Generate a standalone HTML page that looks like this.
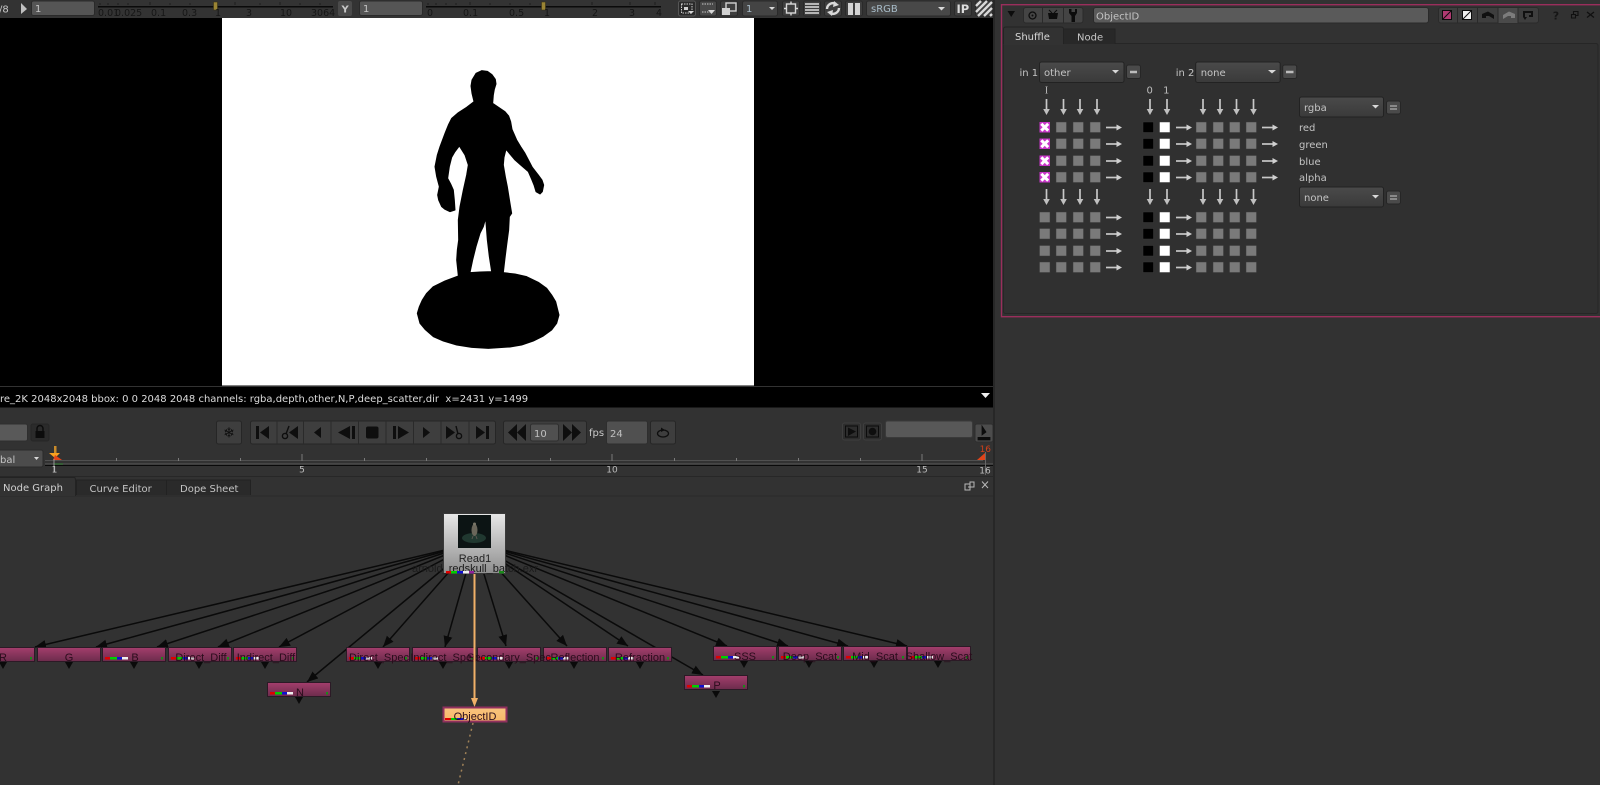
<!DOCTYPE html>
<html>
<head>
<meta charset="utf-8">
<title>Nuke Shuffle</title>
<style>
html,body{margin:0;padding:0;background:#323232;width:1600px;height:785px;overflow:hidden}
svg{display:block;position:absolute;left:0;top:0;font-family:"DejaVu Sans","Liberation Sans",sans-serif;font-size:10px}
.s{fill:#c8c8c8}
.d{fill:#161616;font-size:9.5px}
.nl{fill:#2a0c1c;font-family:"Liberation Sans",sans-serif;font-size:11px;text-anchor:middle}
.btn{fill:#3e3e3e;stroke:#262626}
.inp{fill:#555;stroke:#2a2a2a}
.ic{fill:#0e0e0e}
.ts{fill:#bdbdbd;font-size:9px;text-anchor:middle}
</style>
</head>
<body>
<svg width="1600" height="785" viewBox="0 0 1600 785" xmlns="http://www.w3.org/2000/svg">
<defs>
<linearGradient id="ng" x1="0" y1="0" x2="0" y2="1"><stop offset="0" stop-color="#a43e6c"/><stop offset="1" stop-color="#6c2c4c"/></linearGradient>
<linearGradient id="og" x1="0" y1="0" x2="0" y2="1"><stop offset="0" stop-color="#f8c47e"/><stop offset="1" stop-color="#f8b868"/></linearGradient>
<linearGradient id="rg" x1="0" y1="0" x2="0" y2="1"><stop offset="0" stop-color="#e8e8e8"/><stop offset="1" stop-color="#8e8e8e"/></linearGradient>
<linearGradient id="bg" x1="0" y1="0" x2="0" y2="1"><stop offset="0" stop-color="#4a4a4a"/><stop offset="1" stop-color="#3a3a3a"/></linearGradient>
<marker id="ah" markerUnits="userSpaceOnUse" markerWidth="12" markerHeight="10" refX="11" refY="4.5" orient="auto"><path d="M0,0L11,4.5L0,9Z" fill="#0a0a0a"/></marker>
<g id="node"><rect x=".5" y=".5" width="63" height="14" fill="url(#ng)" stroke="#2c1a26"/></g>
<g id="bars"><rect x="3" y="10" width="5" height="2.5" fill="#e00000"/><rect x="8" y="10" width="7" height="2.5" fill="#00d000"/><rect x="15" y="10" width="5" height="2.5" fill="#1010d0"/><rect x="20" y="10" width="6" height="2.5" fill="#f0f0f0"/><rect x="59" y="10" width="2" height="2.5" fill="#1a8a1a"/></g>
<path id="tri" d="M-4,0H4L0,7Z" fill="#0a0a0a"/>
<rect id="sq" width="10.500" height="10.500" fill="#7a7a7a" stroke="#3a3a3a" stroke-width=".5"/>
<rect id="bk" width="10.500" height="10.500" fill="#000" stroke="#3a3a3a" stroke-width=".5"/>
<rect id="wh" width="10.500" height="10.500" fill="#fff" stroke="#3a3a3a" stroke-width=".5"/>
<g id="xb"><rect width="10.500" height="10.500" fill="#c836c8"/><path d="M1.800,1.800L8.700,8.700M8.700,1.800L1.800,8.700" stroke="#fff" stroke-width="3"/></g>
<g id="rarr"><path d="M0,0H11" stroke="#c8c8c8" stroke-width="1.700"/><path d="M10.500,-3L16,0L10.500,3Z" fill="#d0d0d0"/></g>
<g id="darr"><path d="M0,0V11" stroke="#c8c8c8" stroke-width="1.700"/><path d="M-3.300,10L0,16L3.300,10Z" fill="#c0c0c0"/></g>
</defs>

<!-- base -->
<rect width="1600" height="785" fill="#323232"/>

<!-- viewer -->
<rect x="0" y="18" width="993" height="368" fill="#000"/>
<rect x="222" y="18" width="532" height="367.500" fill="#fff"/>
<g transform="translate(400,50) scale(.33333)">
<path fill="#000" stroke="#000" stroke-width="3" stroke-linejoin="round" fill-rule="evenodd" d="M245,62L262,64L276,74L286,88L288,102L283,118L280,135L278,160L300,175L315,185L326,198L332,215L336,238L350,270L362,290L375,310L388,335L397,352L415,375L426,390L431,405L427,425L420,432L408,425L402,405L395,388L385,365L362,345L345,330L318,298L312,322L310,345L316,380L322,410L330,460L335,490L328,500L326,540L320,585L315,625L310,668L345,672L380,680L415,697L440,715L455,735L467,755L477,795L470,820L455,840L430,858L400,873L365,885L330,891L265,895L215,892L170,885L130,873L100,860L75,838L60,820L52,790L58,770L67,750L80,730L100,710L135,693L175,678L170,630L172,600L176,570L175,510L180,470L190,420L200,375L205,345L195,315L178,288L165,305L155,322L148,350L143,385L152,402L160,420L163,450L165,480L150,485L135,478L125,470L116,450L113,435L118,410L110,380L105,350L112,315L120,290L135,250L145,225L155,205L175,188L200,172L222,155L216,130L213,108L216,90L228,70ZM257,505L250,530L240,550L228,590L218,630L210,668L240,666L275,665L268,620L262,570Z"/>
</g>

<!-- top toolbar -->
<rect x="0" y="0" width="993" height="18" fill="#333"/>
<text x="-1" y="12.500" class="s">/8</text>
<path d="M21,3L27,9L21,14Z" fill="#c0c0c0"/>
<rect x="31.500" y="1" width="63" height="14.500" rx="2" class="inp"/>
<text x="35" y="12" fill="#c4c4c4">1</text>
<rect x="98" y="6" width="235" height="1.500" fill="#0a0a0a"/>
<path d="M100,3V5M108,3V5M118,3V5M128,3V5M150,2V5M170,3V5M190,3V5M235,2V5M260,3V5M280,2V5M300,3V5M320,3V5" stroke="#1e1e1e"/>
<rect x="213.500" y="2" width="4" height="8" fill="#9a8434" stroke="#3a3218" stroke-width=".6"/>
<text x="98" y="16" class="d">0.01</text><text x="115" y="16" class="d">0.025</text>
<text x="151" y="16" class="d">0.1</text><text x="182" y="16" class="d">0.3</text><text x="215" y="16" class="d">1</text><text x="246" y="16" class="d">3</text><text x="280" y="16" class="d">10</text><text x="311" y="16" class="d">3064</text>
<rect x="338" y="1" width="14" height="15" rx="2" fill="#4a4a4a"/>
<text x="341.500" y="12.500" fill="#c8c8c8" font-weight="bold" font-size="10">Y</text>
<rect x="359.500" y="1" width="63" height="14.500" rx="2" class="inp"/>
<text x="363" y="12" fill="#c4c4c4">1</text>
<rect x="426" y="6" width="235" height="1.500" fill="#0a0a0a"/>
<path d="M428,3V5M436,3V5M446,3V5M456,3V5M470,2V5M490,3V5M510,3V5M530,3V5M592,2V5M630,2V5M655,2V5" stroke="#1e1e1e"/>
<rect x="541.500" y="2" width="4" height="8" fill="#9a8434" stroke="#3a3218" stroke-width=".6"/>
<text x="427" y="16" class="d">0</text><text x="463" y="16" class="d">0.1</text><text x="509" y="16" class="d">0.5</text><text x="544" y="16" class="d">1</text><text x="592" y="16" class="d">2</text><text x="629" y="16" class="d">3</text><text x="656" y="16" class="d">4</text>

<rect x="678.500" y="1" width="17" height="15" rx="2" fill="#2a2a2a" stroke="#555"/>
<path d="M681.500,4H692V13H681.500Z" fill="none" stroke="#cfcfcf" stroke-dasharray="1.500 1"/><rect x="684" y="7" width="4" height="3" fill="#cfcfcf"/><path d="M688,11H694L691,14Z" fill="#d8d8d8"/>
<rect x="699.500" y="1" width="17" height="15" rx="2" fill="#484848" stroke="#2a2a2a"/>
<path d="M702,4H713M702,12H713" stroke="#c8c8c8" stroke-dasharray="1.500 1"/><path d="M708,10H715L711.500,14Z" fill="#d8d8d8"/>
<rect x="720.500" y="1" width="17" height="15" rx="2" fill="#3e3e3e" stroke="#2a2a2a"/>
<rect x="726" y="3" width="10" height="8" fill="none" stroke="#d0d0d0" stroke-width="1.400"/><rect x="722" y="8" width="8" height="7" fill="#d0d0d0"/>
<rect x="742.500" y="1" width="35" height="15" rx="2" fill="#444" stroke="#2a2a2a"/>
<text x="746" y="12" fill="#a8bcc8">1</text><path d="M769,7H775L772,10Z" fill="#d8d8d8"/>
<rect x="782.500" y="1" width="17" height="15" rx="2" fill="#3e3e3e" stroke="#2a2a2a"/>
<rect x="786.500" y="4" width="9" height="9" fill="none" stroke="#d8d8d8" stroke-width="1.400"/><path d="M791,1.500V4M791,13V15.500M784,8.500H786.500M795.500,8.500H798" stroke="#d8d8d8" stroke-width="1.400"/>
<rect x="803.500" y="1" width="17" height="15" rx="2" fill="#3e3e3e" stroke="#2a2a2a"/>
<path d="M805,4H819M805,7H819M805,10H819M805,13H819" stroke="#c8c8c8" stroke-width="1.800"/>
<rect x="824.500" y="1" width="17" height="15" rx="2" fill="#3e3e3e" stroke="#2a2a2a"/>
<path d="M827,9A6,6 0 0 1 836,4M839,8A6,6 0 0 1 830,13" fill="none" stroke="#d8d8d8" stroke-width="2.400"/><path d="M834,1L839,5L833,7ZM832,16L827,12L833,10Z" fill="#d8d8d8"/>
<rect x="845.500" y="1" width="17" height="15" rx="2" fill="#3e3e3e" stroke="#2a2a2a"/>
<rect x="848" y="3" width="5" height="12" fill="#d4d4d4"/><rect x="855" y="3" width="5" height="12" fill="#d4d4d4"/>
<rect x="866.500" y="1" width="84" height="15" rx="2" fill="#484848" stroke="#2a2a2a"/>
<text x="871" y="12" fill="#a8bcc8">sRGB</text><path d="M938,7H945L941.500,10.500Z" fill="#d8d8d8"/>
<rect x="954.500" y="1" width="17" height="15" rx="2" fill="#3e3e3e" stroke="#2a2a2a"/>
<text x="956.500" y="13" fill="#dcdcdc" font-weight="bold" font-size="11.500">IP</text>
<rect x="975.500" y="1" width="17" height="15" rx="2" fill="#3e3e3e" stroke="#2a2a2a"/>
<path d="M976,6L981,1M976,12L987,1M978,16L992,2M984,16L992,8M990,16L992,14" stroke="#d8d8d8" stroke-width="2.400"/>

<!-- info bar -->
<rect x="0" y="387" width="993" height="20.500" fill="#000"/>
<text x="0" y="402" fill="#dcdcdc" xml:space="preserve">re_2K 2048x2048 bbox: 0 0 2048 2048 channels: rgba,depth,other,N,P,deep_scatter,dir  x=2431 y=1499</text>
<path d="M981,393H990L985.500,398Z" fill="#f0f0f0"/>

<!-- transport -->
<rect x="-2" y="424" width="29.500" height="17" rx="2" fill="#595959" stroke="#2e2e2e"/>
<rect x="31" y="424" width="18" height="17" rx="2" fill="#2b2b2b" stroke="#262626"/>
<path d="M37,431V428.500A3,3 0 0 1 43,428.500V431" fill="none" stroke="#0c0c0c" stroke-width="1.500"/><rect x="35.500" y="431" width="9" height="7" fill="#0c0c0c"/>
<rect x="216.500" y="421" width="25" height="23" rx="2" class="btn"/>
<text x="229" y="437.500" fill="#0e0e0e" font-size="14" text-anchor="middle">❄</text>

<rect x="250.500" y="421" width="245" height="23" rx="2" class="btn"/>
<path d="M277,421V444M303.500,421V444M331,421V444M358.500,421V444M386,421V444M413.500,421V444M441,421V444M469,421V444" stroke="#2a2a2a"/>
<g class="ic">
<path d="M256,426H259V439H256ZM269,426V439L260,432.500Z"/>
<path d="M298,426V439L289,432.500Z"/><circle cx="285" cy="436" r="2.600" fill="none" stroke="#0e0e0e" stroke-width="1.400"/><path d="M286,434L289,426" stroke="#0e0e0e" stroke-width="1.400" fill="none"/>
<path d="M321,427V438L314,432.500Z"/>
<path d="M350,426V439L338,432.500ZM352,426H355V439H352Z"/>
<rect x="366" y="426.500" width="12.500" height="12" rx="2"/>
<path d="M393,426H396V439H393ZM398,426V439L409,432.500Z"/>
<path d="M423,427V438L430,432.500Z"/>
<path d="M446,426V439L455,432.500Z"/><circle cx="459" cy="436" r="2.600" fill="none" stroke="#0e0e0e" stroke-width="1.400"/><path d="M458,434L456,426" stroke="#0e0e0e" stroke-width="1.400" fill="none"/>
<path d="M476,426V439L485,432.500ZM486,426H489V439H486Z"/>
</g>

<rect x="503.500" y="421" width="83" height="23" rx="2" class="btn"/>
<path d="M508,432.500L517,424V441ZM517,432.500L526,424V441Z" class="ic"/>
<rect x="530.500" y="424" width="28" height="17" rx="2" fill="#505050" stroke="#2e2e2e"/>
<text x="534" y="437" fill="#c0c0c0">10</text>
<path d="M581,432.500L572,424V441ZM572,432.500L563,424V441Z" class="ic"/>
<text x="589" y="436" fill="#c8c8c8">fps</text>
<rect x="606.500" y="421" width="41" height="23" rx="2" fill="#505050" stroke="#2e2e2e"/>
<text x="610" y="437" fill="#c0c0c0">24</text>
<rect x="650.500" y="421" width="25" height="23" rx="2" class="btn"/>
<ellipse cx="663" cy="433.500" rx="5.500" ry="3.500" fill="none" stroke="#0e0e0e" stroke-width="1.300"/><path d="M661,427.500L665,430L661,432Z" class="ic"/>
<rect x="842.500" y="423" width="18" height="17" rx="2" fill="#2d2d2d" stroke="#3e3e3e"/>
<rect x="845.500" y="426" width="12" height="11" fill="none" stroke="#0c0c0c"/><path d="M848,427.500V436L856,431.500Z" class="ic"/>
<rect x="863.500" y="423" width="18" height="17" rx="2" fill="#2d2d2d" stroke="#3e3e3e"/>
<rect x="866.500" y="426" width="12" height="11" fill="none" stroke="#0c0c0c"/><circle cx="872.500" cy="431.500" r="3.800" class="ic"/>
<rect x="885.500" y="421" width="87" height="16.500" rx="2" fill="#585858" stroke="#3a3a3a"/>
<rect x="975" y="424" width="18" height="18" rx="2" fill="#4c4c4c" stroke="#2e2e2e"/>
<path d="M982,426L986,432L982,435ZM978,437V440H990V437M981,439V440M984,438V440M987,439V440" fill="#0c0c0c" stroke="#0c0c0c" stroke-width=".8"/>

<!-- timeline -->
<rect x="-4" y="450" width="47" height="17" rx="2" fill="#4c4c4c" stroke="#2a2a2a"/>
<text x="0" y="463" fill="#c4c4c4">bal</text><path d="M34,457H39L36.500,460Z" fill="#d8d8d8"/>
<path d="M45,460.500H983" stroke="#505050"/>
<rect x="45" y="465" width="948" height="1" fill="#0a0a0a"/>
<rect x="45" y="463.500" width="948" height=".8" fill="#5a5a5a"/>
<path d="M54,464H63" stroke="#3a7a3a" stroke-width="1.200"/>
<path d="M116.500,458V461M178.500,458V461M240.500,458V461M302,454V461M364.500,458V461M426.500,458V461M488.500,458V461M550.500,458V461M612,454V461M674.500,458V461M736.500,458V461M798.500,458V461M860.500,458V461M922,454V461" stroke="#7a7a7a"/>
<path d="M985.500,452V475" stroke="#666"/>
<rect x="54" y="446" width="2.500" height="7" fill="#c88a2a"/>
<path d="M49,453H60L55,458Z" fill="#f8a020"/>
<path d="M55,455L62,460H53Z" fill="#e0441a"/>
<path d="M54,459V472" stroke="#aaa" stroke-width=".8"/>
<path d="M985,453V460H977Z" fill="#e0441a"/>
<text x="985.300" y="452" font-size="9" fill="#d0401a" text-anchor="middle">16</text>
<text x="54.500" y="472.500" class="ts">1</text><text x="302" y="472.500" class="ts">5</text><text x="612" y="472.500" class="ts">10</text><text x="922" y="472.500" class="ts">15</text><text x="985" y="473.500" class="ts">16</text>
<rect x="0" y="476" width="993" height="1" fill="#272727"/>

<!-- tabs -->
<rect x="0" y="495.500" width="993" height="1" fill="#292929"/>
<path d="M76.500,495V480H166.500V495" fill="#2a2a2a" stroke="#222"/>
<path d="M166.500,495V480H250.500V495" fill="#2a2a2a" stroke="#222"/>
<path d="M0,477.500H75.500V496H0Z" fill="#323232"/><path d="M0,477.500H74.500Q75.500,478 75.500,480V496" fill="none" stroke="#232323"/>
<text x="3" y="491" fill="#d0d0d0">Node Graph</text>
<text x="89.500" y="492" fill="#c4c4c4">Curve Editor</text>
<text x="180" y="492" fill="#c4c4c4">Dope Sheet</text>
<path d="M968,487H974V482H970V484M965,484H970V490H965Z" fill="none" stroke="#b8b8b8"/>
<path d="M982,481.500L988,488M988,481.500L982,488" stroke="#b8b8b8"/>

<!-- panel divider -->
<rect x="993" y="0" width="2" height="785" fill="#272727"/>

<!-- node graph edges -->
<g stroke="#0a0a0a" stroke-width="1.500" fill="none">
<path d="M474.500,543L35,647" marker-end="url(#ah)"/>
<path d="M474.500,543L96,647" marker-end="url(#ah)"/>
<path d="M474.500,543L157,647" marker-end="url(#ah)"/>
<path d="M474.500,543L218,647" marker-end="url(#ah)"/>
<path d="M474.500,543L279,647" marker-end="url(#ah)"/>
<path d="M474.500,543L307,682" marker-end="url(#ah)"/>
<path d="M474.500,543L383,647" marker-end="url(#ah)"/>
<path d="M474.500,543L445,647" marker-end="url(#ah)"/>
<path d="M474.500,543L506,646" marker-end="url(#ah)"/>
<path d="M474.500,543L567,646" marker-end="url(#ah)"/>
<path d="M474.500,543L628,646" marker-end="url(#ah)"/>
<path d="M474.500,543L703,675" marker-end="url(#ah)"/>
<path d="M474.500,543L727,646" marker-end="url(#ah)"/>
<path d="M474.500,543L788,646" marker-end="url(#ah)"/>
<path d="M474.500,543L848,646" marker-end="url(#ah)"/>
<path d="M474.500,543L907,646" marker-end="url(#ah)"/>
</g>

<!-- tri connectors -->
<use href="#tri" x="3" y="662"/><use href="#tri" x="69" y="662"/><use href="#tri" x="134" y="662"/><use href="#tri" x="199" y="662"/><use href="#tri" x="265" y="662"/><use href="#tri" x="378" y="662"/><use href="#tri" x="443" y="662"/><use href="#tri" x="509" y="662"/><use href="#tri" x="574" y="662"/><use href="#tri" x="640" y="662"/><use href="#tri" x="744" y="661"/><use href="#tri" x="809" y="661"/><use href="#tri" x="874" y="661"/><use href="#tri" x="938" y="661"/><use href="#tri" x="299" y="697"/><use href="#tri" x="716" y="691"/>

<!-- nodes -->
<use href="#node" x="-29" y="647"/><use href="#bars" x="-29" y="647"/>
<use href="#node" x="37" y="647"/>
<use href="#node" x="102" y="647"/><use href="#bars" x="102" y="647"/>
<use href="#node" x="168" y="647"/><use href="#bars" x="168" y="647"/>
<use href="#node" x="233" y="647"/><use href="#bars" x="233" y="647"/>
<use href="#node" x="346" y="647"/><use href="#bars" x="346" y="647"/>
<use href="#node" x="412" y="647"/><use href="#bars" x="412" y="647"/>
<use href="#node" x="477" y="647"/><use href="#bars" x="477" y="647"/>
<use href="#node" x="543" y="647"/><use href="#bars" x="543" y="647"/>
<use href="#node" x="608" y="647"/><use href="#bars" x="608" y="647"/>
<use href="#node" x="713" y="646"/><use href="#bars" x="713" y="646"/>
<use href="#node" x="778" y="646"/><use href="#bars" x="778" y="646"/>
<use href="#node" x="843" y="646"/><use href="#bars" x="843" y="646"/>
<use href="#node" x="907" y="646"/><use href="#bars" x="907" y="646"/>
<use href="#node" x="267" y="682"/><use href="#bars" x="267" y="682"/>
<use href="#node" x="684" y="675"/><use href="#bars" x="684" y="675"/>

<text x="3" y="661" class="nl">R</text>
<text x="69" y="661" class="nl">G</text>
<text x="135" y="661" class="nl">B</text>
<text x="201" y="661" class="nl">Direct_Diff</text>
<text x="266" y="661" class="nl">Indirect_Diff</text>
<text x="379" y="661" class="nl">Direct_Spec</text>
<text x="444" y="661" class="nl">Indirect_Spec</text>
<text x="509" y="661" class="nl">Secondary_Spec</text>
<text x="575" y="661" class="nl">Reflection</text>
<text x="640" y="661" class="nl">Refraction</text>
<text x="745" y="660" class="nl">SSS</text>
<text x="810" y="660" class="nl">Deep_Scat</text>
<text x="875" y="660" class="nl">Mid_Scat</text>
<text x="939" y="660" class="nl">Shallow_Scat</text>
<text x="300" y="696" class="nl">N</text>
<text x="717" y="689" class="nl">P</text>

<!-- Read node -->
<rect x="443.500" y="513.500" width="62" height="60" fill="url(#rg)" stroke="#3a3a3a"/>
<rect x="458" y="515" width="33" height="33" fill="#0c1414"/>
<ellipse cx="474" cy="538" rx="12" ry="5" fill="#203830"/>
<ellipse cx="474.500" cy="530" rx="3" ry="6" fill="#6a665a"/><circle cx="474.500" cy="524" r="1.500" fill="#7a7668"/><path d="M473,536L472,539M476,536L477,539" stroke="#5a5650"/>
<text x="475" y="562" class="nl" style="fill:#222">Read1</text>
<text x="475" y="572" class="nl" style="fill:#1c1c1c">arnold_redskull_batch.exr</text>
<rect x="446" y="571" width="5" height="2.500" fill="#e00000"/><rect x="451" y="571" width="6" height="2.500" fill="#00d000"/><rect x="457" y="571" width="6" height="2.500" fill="#1010d0"/><rect x="463" y="571" width="6" height="2.500" fill="#f0f0f0"/><rect x="469" y="571" width="5" height="2.500" fill="#90209a"/><rect x="499" y="571" width="5" height="2.500" fill="#1a8a1a"/>

<!-- orange arrow -->
<path d="M474.500,574V700" stroke="#f0b068" stroke-width="2"/>
<path d="M471,698H478L474.500,707Z" fill="#f0b068"/>
<rect x="443.500" y="707.500" width="63" height="14" fill="url(#og)" stroke="#90305e" stroke-width="2"/>
<rect x="445" y="718" width="6" height="2" fill="#e00000"/><rect x="451" y="718" width="6" height="2" fill="#00d000"/><rect x="457" y="718" width="6" height="2" fill="#1010d0"/><rect x="463" y="718" width="3" height="2" fill="#f0f0f0"/>
<text x="475" y="720" class="nl">ObjectID</text>
<path d="M473,723L458,785" stroke="#a08258" stroke-width="1.500" stroke-dasharray="2 4" fill="none"/>

<!-- properties panel -->
<rect x="1001.500" y="4.700" width="600" height="312" fill="#323232" stroke="#9a2e5c" stroke-width="1.400"/>
<path d="M1007.500,11H1015L1011.200,17Z" fill="#0c0c0c"/>
<rect x="1023.500" y="7.500" width="59.500" height="15.500" rx="2.500" fill="#444" stroke="#2a2a2a"/>
<path d="M1042.500,8V23M1063.500,8V23" stroke="#2a2a2a"/>
<circle cx="1032.500" cy="15.500" r="3.500" fill="none" stroke="#0c0c0c" stroke-width="1.300"/><circle cx="1032.500" cy="15.500" r="1" fill="#0c0c0c"/>
<path d="M1048,13H1058L1057,19H1049Z" fill="#0c0c0c"/><path d="M1052,13L1049,10M1054,13L1057,10" stroke="#0c0c0c"/>
<path d="M1069,9V13L1071.500,16V22H1075V16L1077,13V9H1075V12H1071.500V9Z" fill="#0c0c0c"/>
<rect x="1093.500" y="7.500" width="335" height="15.500" rx="2.500" fill="#5a5a5a" stroke="#2a2a2a"/>
<text x="1096" y="19.500" fill="#c4c4c4">ObjectID</text>
<rect x="1438.500" y="7.500" width="100" height="15.500" rx="2.500" fill="#3e3e3e" stroke="#2a2a2a"/>
<rect x="1498" y="8" width="20" height="15" fill="#4a4a4a"/>
<path d="M1457.500,8V23M1477.500,8V23M1498,8V23M1518,8V23" stroke="#2a2a2a"/>
<rect x="1442.500" y="10.500" width="9" height="9" fill="#b03a72" stroke="#0c0c0c"/><path d="M1442.500,19.500L1451.500,10.500" stroke="#0c0c0c"/>
<rect x="1462.500" y="10.500" width="9" height="9" fill="#f0f0f0" stroke="#0c0c0c"/><path d="M1463,19L1471,11" stroke="#0c0c0c"/>
<path d="M1482,18V14L1488,11.500L1494,15V19L1489,16H1486V18Z" fill="#101010"/>
<path d="M1515,18V14L1509,11.500L1503,15V19L1508,16H1511V18Z" fill="#7c7c7c"/>
<path d="M1523,11H1533V17H1529V15H1531V13H1525V17H1527L1525,20L1523,17Z" fill="#101010"/>
<text x="1556" y="19.500" fill="#161616" font-weight="bold" font-size="11" text-anchor="middle">?</text>
<path d="M1571.500,14.500H1575.500V18H1571.500ZM1573.500,14V11.500H1578V15.500H1576" fill="none" stroke="#101010" stroke-width="1.100"/>
<path d="M1587,12L1594,17.500M1594,12L1587,17.500" stroke="#101010" stroke-width="1.300"/>

<rect x="1003.500" y="43.500" width="594.500" height="270" rx="2" fill="#303030" stroke="#262626"/>
<path d="M1063.500,44V29H1115V44" fill="#282828" stroke="#232323"/>
<path d="M1003.500,44V29Q1003.500,27 1006,27H1061Q1063.500,27 1063.500,29V44" fill="#323232" stroke="#232323"/>
<rect x="1004" y="43" width="59" height="2" fill="#323232"/>
<text x="1015" y="40" fill="#d8d8d8">Shuffle</text>
<text x="1077" y="40.700" fill="#c8c8c8">Node</text>

<text x="1019.500" y="76" fill="#c4c4c4">in 1</text>
<rect x="1039.500" y="62" width="84.500" height="20.500" rx="2" fill="url(#bg)" stroke="#222"/>
<text x="1044" y="76" fill="#c4c4c4">other</text><path d="M1112,70H1119L1115.500,73.500Z" fill="#d8d8d8"/>
<rect x="1126.500" y="65" width="14" height="13.500" rx="2" fill="#4a4a4a" stroke="#262626"/><path d="M1130,72H1137" stroke="#bcbcbc" stroke-width="2.500"/>
<text x="1175.700" y="76" fill="#c4c4c4">in 2</text>
<rect x="1195.700" y="62" width="84.500" height="20.500" rx="2" fill="url(#bg)" stroke="#222"/>
<text x="1200.700" y="76" fill="#c4c4c4">none</text><path d="M1268,70H1276L1272,73.500Z" fill="#d8d8d8"/>
<rect x="1282.700" y="65" width="14" height="13.500" rx="2" fill="#4a4a4a" stroke="#262626"/><path d="M1286,72H1293.500" stroke="#bcbcbc" stroke-width="2.500"/>

<text x="1046.500" y="93.500" fill="#bdbdbd" text-anchor="middle" font-family="Liberation Serif, serif">I</text>
<text x="1149.700" y="93.500" fill="#bdbdbd" text-anchor="middle">0</text>
<text x="1166.300" y="93.500" fill="#bdbdbd" text-anchor="middle">1</text>

<!-- down arrows -->
<use href="#darr" x="1046.500" y="99"/><use href="#darr" x="1063.500" y="99"/><use href="#darr" x="1080" y="99"/><use href="#darr" x="1097" y="99"/>
<use href="#darr" x="1150" y="99"/><use href="#darr" x="1167" y="99"/>
<use href="#darr" x="1203" y="99"/><use href="#darr" x="1220" y="99"/><use href="#darr" x="1236.500" y="99"/><use href="#darr" x="1253.500" y="99"/>
<use href="#darr" x="1046.500" y="189"/><use href="#darr" x="1063.500" y="189"/><use href="#darr" x="1080" y="189"/><use href="#darr" x="1097" y="189"/>
<use href="#darr" x="1150" y="189"/><use href="#darr" x="1167" y="189"/>
<use href="#darr" x="1203" y="189"/><use href="#darr" x="1220" y="189"/><use href="#darr" x="1236.500" y="189"/><use href="#darr" x="1253.500" y="189"/>

<!-- matrix row 1 -->
<use href="#xb" x="1039.500" y="122"/><use href="#sq" x="1056" y="122"/><use href="#sq" x="1073" y="122"/><use href="#sq" x="1090" y="122"/><use href="#rarr" x="1106" y="127.500"/><use href="#bk" x="1143" y="122"/><use href="#wh" x="1159.500" y="122"/><use href="#rarr" x="1176" y="127.500"/><use href="#sq" x="1196" y="122"/><use href="#sq" x="1213" y="122"/><use href="#sq" x="1229.500" y="122"/><use href="#sq" x="1246" y="122"/><use href="#rarr" x="1262" y="127.500"/>
<use href="#xb" x="1039.500" y="138.500"/><use href="#sq" x="1056" y="138.500"/><use href="#sq" x="1073" y="138.500"/><use href="#sq" x="1090" y="138.500"/><use href="#rarr" x="1106" y="144"/><use href="#bk" x="1143" y="138.500"/><use href="#wh" x="1159.500" y="138.500"/><use href="#rarr" x="1176" y="144"/><use href="#sq" x="1196" y="138.500"/><use href="#sq" x="1213" y="138.500"/><use href="#sq" x="1229.500" y="138.500"/><use href="#sq" x="1246" y="138.500"/><use href="#rarr" x="1262" y="144"/>
<use href="#xb" x="1039.500" y="155.500"/><use href="#sq" x="1056" y="155.500"/><use href="#sq" x="1073" y="155.500"/><use href="#sq" x="1090" y="155.500"/><use href="#rarr" x="1106" y="161"/><use href="#bk" x="1143" y="155.500"/><use href="#wh" x="1159.500" y="155.500"/><use href="#rarr" x="1176" y="161"/><use href="#sq" x="1196" y="155.500"/><use href="#sq" x="1213" y="155.500"/><use href="#sq" x="1229.500" y="155.500"/><use href="#sq" x="1246" y="155.500"/><use href="#rarr" x="1262" y="161"/>
<use href="#xb" x="1039.500" y="172"/><use href="#sq" x="1056" y="172"/><use href="#sq" x="1073" y="172"/><use href="#sq" x="1090" y="172"/><use href="#rarr" x="1106" y="177.500"/><use href="#bk" x="1143" y="172"/><use href="#wh" x="1159.500" y="172"/><use href="#rarr" x="1176" y="177.500"/><use href="#sq" x="1196" y="172"/><use href="#sq" x="1213" y="172"/><use href="#sq" x="1229.500" y="172"/><use href="#sq" x="1246" y="172"/><use href="#rarr" x="1262" y="177.500"/>
<!-- matrix row 2 -->
<use href="#sq" x="1039.500" y="212"/><use href="#sq" x="1056" y="212"/><use href="#sq" x="1073" y="212"/><use href="#sq" x="1090" y="212"/><use href="#rarr" x="1106" y="217.500"/><use href="#bk" x="1143" y="212"/><use href="#wh" x="1159.500" y="212"/><use href="#rarr" x="1176" y="217.500"/><use href="#sq" x="1196" y="212"/><use href="#sq" x="1213" y="212"/><use href="#sq" x="1229.500" y="212"/><use href="#sq" x="1246" y="212"/>
<use href="#sq" x="1039.500" y="228.500"/><use href="#sq" x="1056" y="228.500"/><use href="#sq" x="1073" y="228.500"/><use href="#sq" x="1090" y="228.500"/><use href="#rarr" x="1106" y="234"/><use href="#bk" x="1143" y="228.500"/><use href="#wh" x="1159.500" y="228.500"/><use href="#rarr" x="1176" y="234"/><use href="#sq" x="1196" y="228.500"/><use href="#sq" x="1213" y="228.500"/><use href="#sq" x="1229.500" y="228.500"/><use href="#sq" x="1246" y="228.500"/>
<use href="#sq" x="1039.500" y="245.500"/><use href="#sq" x="1056" y="245.500"/><use href="#sq" x="1073" y="245.500"/><use href="#sq" x="1090" y="245.500"/><use href="#rarr" x="1106" y="251"/><use href="#bk" x="1143" y="245.500"/><use href="#wh" x="1159.500" y="245.500"/><use href="#rarr" x="1176" y="251"/><use href="#sq" x="1196" y="245.500"/><use href="#sq" x="1213" y="245.500"/><use href="#sq" x="1229.500" y="245.500"/><use href="#sq" x="1246" y="245.500"/>
<use href="#sq" x="1039.500" y="262"/><use href="#sq" x="1056" y="262"/><use href="#sq" x="1073" y="262"/><use href="#sq" x="1090" y="262"/><use href="#rarr" x="1106" y="267.500"/><use href="#bk" x="1143" y="262"/><use href="#wh" x="1159.500" y="262"/><use href="#rarr" x="1176" y="267.500"/><use href="#sq" x="1196" y="262"/><use href="#sq" x="1213" y="262"/><use href="#sq" x="1229.500" y="262"/><use href="#sq" x="1246" y="262"/>

<rect x="1299.500" y="97" width="84" height="20" rx="2" fill="url(#bg)" stroke="#222"/>
<text x="1304" y="111" fill="#c4c4c4">rgba</text><path d="M1372,105H1379L1375.500,108.500Z" fill="#d8d8d8"/>
<rect x="1386.500" y="101" width="14" height="13" rx="2" fill="#4a4a4a" stroke="#262626"/><path d="M1390,106H1397M1390,109H1397" stroke="#c8c8c8"/>
<text x="1299" y="131" fill="#c4c4c4">red</text>
<text x="1299" y="148" fill="#c4c4c4">green</text>
<text x="1299" y="165" fill="#c4c4c4">blue</text>
<text x="1299" y="181" fill="#c4c4c4">alpha</text>
<rect x="1299.500" y="187" width="84" height="20" rx="2" fill="url(#bg)" stroke="#222"/>
<text x="1304" y="201" fill="#c4c4c4">none</text><path d="M1372,195H1379L1375.500,198.500Z" fill="#d8d8d8"/>
<rect x="1386.500" y="191" width="14" height="13" rx="2" fill="#4a4a4a" stroke="#262626"/><path d="M1390,196H1397M1390,199H1397" stroke="#c8c8c8"/>
</svg>
</body>
</html>
